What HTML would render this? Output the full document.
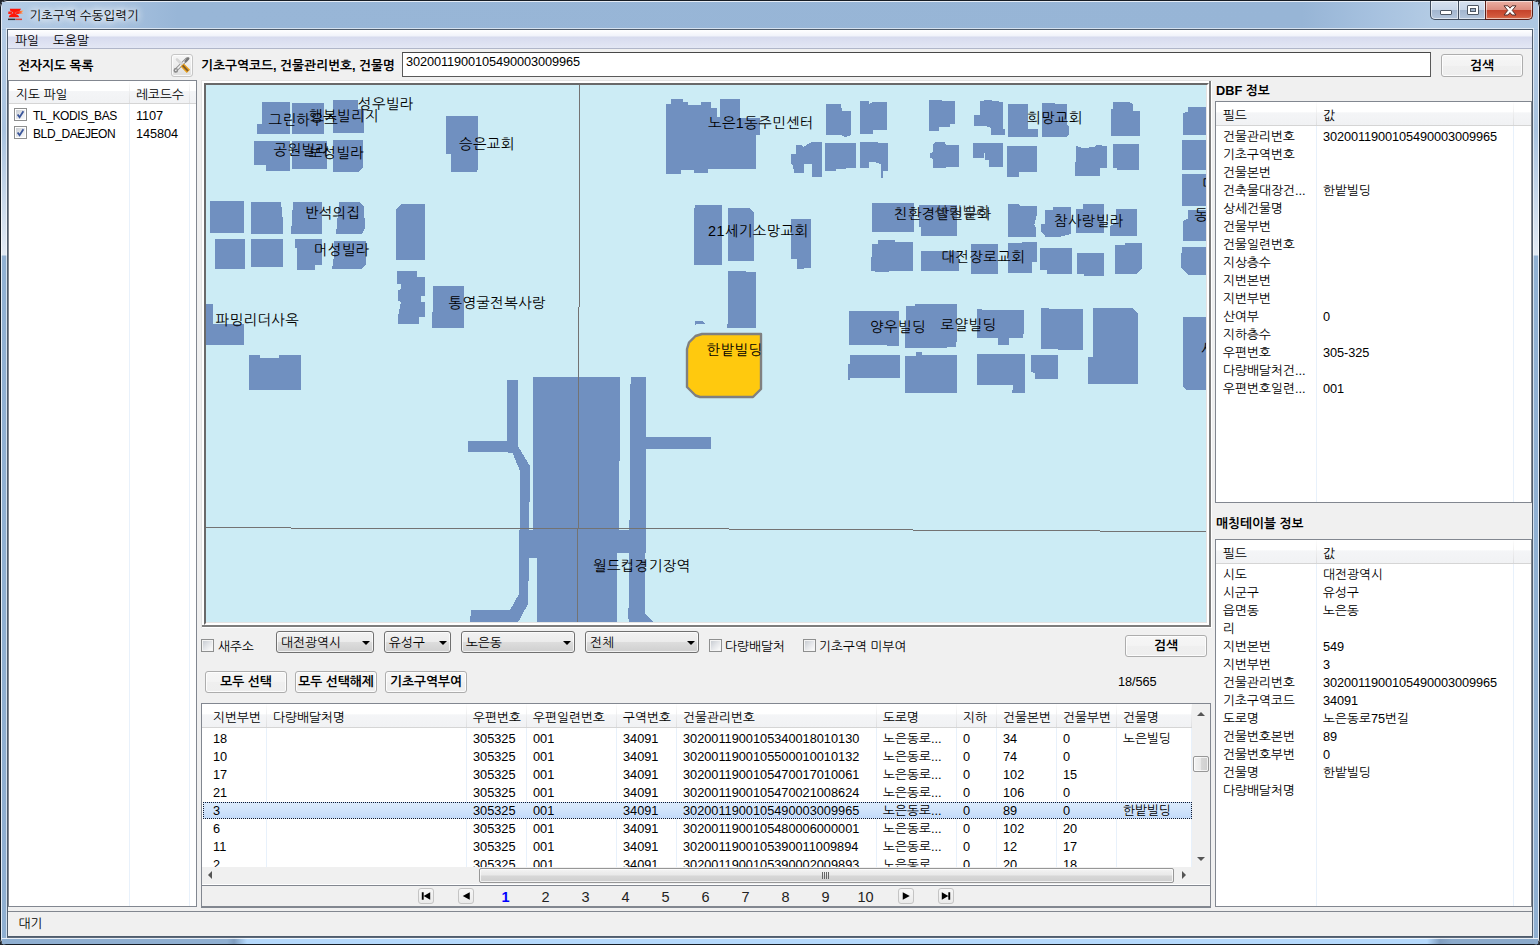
<!DOCTYPE html>
<html lang="ko"><head><meta charset="utf-8"><title>기초구역 수동입력기</title>
<style>
*{box-sizing:border-box;margin:0;padding:0}
html,body{width:1540px;height:945px;overflow:hidden;background:#20242b}
body{font-family:"Liberation Sans","NanumGothic",sans-serif;font-size:12.75px;color:#000;position:relative;line-height:14px}
.a{position:absolute}
.t{position:absolute;white-space:nowrap;line-height:14px;height:14px}
.b{font-weight:bold}
#frame{left:0;top:0;width:1540px;height:945px;border-radius:7px 7px 6px 6px;overflow:hidden;
 background:linear-gradient(180deg,#97b5d6 0px,#97b5d6 29px,#b4cbe4 30px,#a8c2df 130px,#e1e9f3 255px,#91b1d3 256px,#8fafd1 945px);
 box-shadow:inset 0 0 0 1px #161c24, inset 0 0 0 2px rgba(255,255,255,.75)}
#tbar{left:2px;top:2px;width:1536px;height:27px;background:linear-gradient(90deg,#b4cce6 0,#a9c3e0 100px,#98b6d7 175px,#97b5d6 1300px,#a6c1df 1370px,#b3cbe4 1430px,#aec7e2 1536px)}
#bbar{left:2px;top:938px;width:1536px;height:5px;background:linear-gradient(90deg,#8fafd1 0,#8fafd1 225px,#7f9dbf 232px,#b5d9fc 245px,#b5d9fc 1425px,#7f9dbf 1438px,#8baacb 1450px,#8baacb 1536px);border-top:1px solid rgba(255,255,255,.8);box-sizing:content-box}
.cap{position:absolute;top:1px;height:19px;border:1px solid #3f4b5c;border-top:none;box-shadow:inset 0 0 0 1px rgba(255,255,255,.55)}
#client{left:8px;top:30px;width:1524px;height:906px;background:#f0f0f0;box-shadow:0 0 0 1px #4f5c6c,0 0 0 2px rgba(255,255,255,.6)}
#menubar{left:8px;top:30px;width:1524px;height:19px;background:linear-gradient(180deg,#fff 0,#f1f3fa 6px,#d7dbee 7px,#e2e6f4 17px,#e4e8f5 18px);border-bottom:1px solid #b0b6c9}
.lv{position:absolute;background:#fff;border:1px solid #828790;overflow:hidden}
.hd{position:absolute;left:0;top:0;right:0;background:linear-gradient(180deg,#fff 0,#fff 45%,#f4f5f7 46%,#f1f2f4 100%);border-bottom:1px solid #d5d5d5}
.hs{position:absolute;top:0;width:1px;background:linear-gradient(180deg,#fdfdfd,#dedfe1)}
.cs{position:absolute;width:1px;background:#e8f1fb}
.btn{position:absolute;border:1px solid #adadad;border-radius:3px;background:linear-gradient(180deg,#f6f6f6 0,#f3f3f3 50%,#efefef 51%,#eeeeee 100%);box-shadow:inset 0 0 0 1px rgba(255,255,255,.8);text-align:center;font-weight:bold;white-space:nowrap}
.cb{position:absolute;width:13px;height:13px;border:1px solid #8e8f8f;background:#f4f4f4}
.cb i{position:absolute;left:1px;top:1px;width:9px;height:9px;background:linear-gradient(135deg,#c9cdd3 0,#e4e6e9 50%,#fbfbfb 100%)}
.combo{position:absolute;height:22px;border:1px solid #707070;border-radius:3px;background:linear-gradient(180deg,#f2f2f2 0,#ebebeb 50%,#dddddd 51%,#cfcfcf 100%);box-shadow:inset 0 0 0 1px rgba(255,255,255,.7)}
.combo span{position:absolute;left:4px;top:3.5px;white-space:nowrap}
.combo b{position:absolute;right:3px;top:9px;width:0;height:0;border-left:4px solid transparent;border-right:4px solid transparent;border-top:4px solid #000}
</style></head>
<body>
<div id="frame" class="a"><div id="tbar" class="a"></div><div id="bbar" class="a"></div></div>
<svg class="a" style="left:7px;top:7px" width="18" height="15" viewBox="7 7 18 15"><defs><linearGradient id="fl" x1="0" x2="1"><stop offset="0" stop-color="#ff2a10"/><stop offset="1" stop-color="#ffd070"/></linearGradient></defs><path d="M9.8 8.8H21L19.6 11L16 12L12.6 12L10.4 11Z" fill="#ff1505"/><path d="M8.8 17.2H19.4L18 15L15 13.8L12 13.8L9.6 15Z" fill="#ff1505"/><path d="M8.4 11.6H12.2L11.8 14H8.2ZM12.8 11.4H16L15.4 14.2H12.4ZM16.4 11.2H19.6L18.8 14H15.8Z" fill="#ff2010"/><path d="M19 11L24 10.6L21.5 12.4L23.6 13.6L18.6 13.8Z" fill="url(#fl)"/><rect x="8" y="18.6" width="7.4" height="1.5" fill="#333"/><rect x="15.6" y="18.6" width="6.4" height="1.5" fill="#e0453a"/></svg>
<div class="t " style="left:29.5px;top:8.5px;font-size:12.5px;text-shadow:0 0 6px #fff,0 0 8px #fff,0 0 10px rgba(255,255,255,.9)">기초구역 수동입력기</div>
<div class="cap" style="left:1430px;width:29px;border-radius:0 0 0 5px;background:linear-gradient(180deg,#d6e1ef 0,#c8d6e8 48%,#a3b6cf 52%,#b4c6dc 100%)"><div class="a" style="left:9px;top:9px;width:12px;height:5px;background:#fff;border:1px solid #4d5764;border-radius:1px"></div></div>
<div class="cap" style="left:1458px;width:28px;background:linear-gradient(180deg,#d6e1ef 0,#c8d6e8 48%,#a3b6cf 52%,#b4c6dc 100%)"><div class="a" style="left:8px;top:4px;width:12px;height:10px;background:#fff;border:1px solid #4d5764;border-radius:1px"><div class="a" style="left:2px;top:2px;width:6px;height:4px;border:1px solid #4d5764;background:#9fb1c8"></div></div></div>
<div class="cap" style="left:1485px;width:48px;border-radius:0 0 5px 0;border-color:#5a1f18;background:linear-gradient(180deg,#eab0a4 0,#dc8c7e 48%,#c5432b 52%,#d2583c 85%,#d97858 100%)"><svg class="a" style="left:16px;top:3px" width="16" height="13" viewBox="0 0 16 13"><path d="M2 1.8L6 1.8L8 4.2L10 1.8L14 1.8L10.2 6.4L14 11L10 11L8 8.6L6 11L2 11L5.8 6.4Z" fill="#fff" stroke="#54302c" stroke-width="1"/></svg></div>
<div id="client" class="a"></div>
<div id="menubar" class="a"></div>
<div class="t " style="left:15px;top:33.5px;">파일</div>
<div class="t " style="left:53px;top:33.5px;">도움말</div>
<div class="t b" style="left:18px;top:59px;">전자지도 목록</div>
<div class="btn" style="left:171px;top:54px;width:22px;height:23px;border-color:#c6c6c6;background:linear-gradient(180deg,#f6f6f6 0,#ededed 50%,#dedede 100%)" id="toolbtn"><svg class="a" style="left:0;top:0" width="20" height="21" viewBox="172 55 20 21"><path d="M175.5 70.5L187 59" stroke="#8d8d8d" stroke-width="3.2" stroke-linecap="round"/><path d="M175.8 70.2L186.5 59.5" stroke="#f4f4f4" stroke-width="1.6" stroke-linecap="round"/><path d="M185.6 61.4L188.3 58.4" stroke="#777" stroke-width="2.4" stroke-linecap="round"/><circle cx="175.8" cy="70.4" r="1.7" fill="none" stroke="#8a8a8a" stroke-width="1.2"/><path d="M177 59.5L181.6 64" stroke="#d6d6d6" stroke-width="2.6" stroke-linecap="round"/><path d="M182.2 65L188.4 71.4" stroke="#e9a01c" stroke-width="4.6"/><path d="M182.6 65.4L188 71" stroke="#7b5a2e" stroke-width="1.8"/></svg></div>
<div class="t b" style="left:201px;top:59px;">기초구역코드, 건물관리번호, 건물명</div>
<div class="a" style="left:402px;top:52px;width:1029px;height:25px;background:#fff;border:1px solid #5a5a5a;border-top-color:#484848"></div>
<div class="t " style="left:406px;top:55px;letter-spacing:-0.09px;">3020011900105490003009965</div>
<div class="btn" style="left:1441px;top:54px;width:82px;height:23px;line-height:22px">검색</div>
<div class="lv" style="left:8px;top:80px;width:189px;height:827px">
<div class="hd" style="height:23px"></div>
<div class="hs" style="left:120px;height:22px"></div><div class="hs" style="left:180px;height:22px"></div>
<div class="cs" style="left:120px;top:23px;height:810px"></div><div class="cs" style="left:180px;top:23px;height:810px"></div>
</div>
<div class="t " style="left:16px;top:87.5px;">지도 파일</div>
<div class="t " style="left:136px;top:87.5px;">레코드수</div>
<div class="cb" style="left:14px;top:108.0px;background:#fff" ><i></i><svg width="11" height="11" viewBox="0 0 11 11" style="position:absolute;left:0;top:0"><path d="M2.6 5.4 L4.6 8.2 L8.4 2.2" stroke="#3a559a" stroke-width="1.8" fill="none"/></svg></div>
<div class="t " style="left:33px;top:108.5px;font-size:12px;letter-spacing:-0.4px">TL_KODIS_BAS</div>
<div class="t " style="left:136px;top:108.5px;letter-spacing:-0.09px;">1107</div>
<div class="cb" style="left:14px;top:126.0px;background:#fff" ><i></i><svg width="11" height="11" viewBox="0 0 11 11" style="position:absolute;left:0;top:0"><path d="M2.6 5.4 L4.6 8.2 L8.4 2.2" stroke="#3a559a" stroke-width="1.8" fill="none"/></svg></div>
<div class="t " style="left:33px;top:126.5px;font-size:12px;letter-spacing:-0.4px">BLD_DAEJEON</div>
<div class="t " style="left:136px;top:126.5px;letter-spacing:-0.09px;">145804</div>
<div id="mapwrap" class="a" style="left:201px;top:80px;width:1011px;height:548px;background:#fff;border-top:1px solid #e3e3e3;border-left:1px solid #e3e3e3"></div>
<div class="a" style="left:202px;top:81px;width:1009px;height:546px;background:#fff;border-right:2px solid #7d7d7d;border-bottom:2px solid #7d7d7d"></div>
<div class="a" style="left:204px;top:83px;width:1005px;height:542px;background:#e3e3e3;border-top:2px solid #696969;border-left:2px solid #696969;border-right:2px solid #fff;border-bottom:2px solid #fff"></div>
<div id="map" class="a" style="left:206px;top:85px;width:1000px;height:537px;overflow:hidden;background:#ccecf5"><svg width="1000" height="538" viewBox="206 85 1000 538" style="position:absolute;left:0;top:0;display:block" shape-rendering="crispEdges">
<rect x="206" y="85" width="1000" height="538" fill="#ccecf5"/>
<g fill="#7090c0">
<polygon points="262,102 290,102 290,134 257,134 257,124 262,124"/>
<polygon points="292,103 323.5,103 323.5,133.5 292,133.5"/>
<polygon points="333,100 358,100 358,109 364,109 364,133 333,133"/>
<polygon points="254,141 290,141 290,171 266,171 266,165 254,165"/>
<polygon points="292,141 327,141 327,169 292,169"/>
<polygon points="333,140 363,140 363,167 358,172 333,172"/>
<polygon points="210,201 244,201 244,233 210,233"/>
<polygon points="251.5,202 281,202 283,222 283,234 251,234"/>
<polygon points="293,202 322,202 322,234 291,234"/>
<polygon points="339,202 359,202 364,207 365,228 362,234 336,234"/>
<polygon points="401,204 425,204 425,259.5 396,259.5 396,210"/>
<polygon points="215,239 245,239 245,269 215,269"/>
<polygon points="251,239 283,239 283,267 251,267"/>
<polygon points="295,239 322,239 322,265 315,265 315,270 297,270 297,248 295,248"/>
<polygon points="334,241 366,241 366,264 361,269 332,269 334,256"/>
<polygon points="397,271 417,271 417,277 425,277 425,296 421,296 421,302 425,302 425,317 419,317 419,324 398,324 398,316 401,302 398,301 398,290 401,289 401,284 397,284"/>
<polygon points="433,286 464,286 464,328 432,328 432,312 433,312"/>
<polygon points="206,304 213,304 213,324 244,324 244,345 206,345"/>
<polygon points="249,355 260,355 260,357.5 279,357.5 279,355 301,355 301,390 249,390"/>
<polygon points="446,116 478,116 478,168 477,172 451,172 451,154 446,154"/>
<polygon points="666,104 671,104 671,99 683,99 683,102 688,102 688,105 701,105 701,102 711,102 711,108 717,108 717,117 720,117 720,99 740,99 740,118 760,118 760,135 756,135 756,169 708,169 708,173 694,173 694,170 681,170 681,174 666,174"/>
<polygon points="826,104 841,104 842,111 851,111 851,135 845,137 841,135 826,135"/>
<polygon points="860,101 869,101 869,104 873,102 887,102 887,130 873,130 873,134 860,134"/>
<polygon points="796,145 802,145 803,147 812,142 822,142 822,177 812,177 812,164 804,164 804,173 794,173 793,165 791,164 791,154 796,154"/>
<polygon points="825,143 856,143 856,168 836,169 836,171 825,171"/>
<polygon points="860,142 878,142 878,143 888,143 888,171 883,171 883,178 881,178 881,164 874,162 869,162 869,168 860,168"/>
<polygon points="695,205 722,205 722,265 694,265 694,211"/>
<polygon points="728,208 750,208 754,212.6 754,261 728,261"/>
<polygon points="791,219 811,219 811,268 797,269 797,259.5 791,258.7"/>
<polygon points="728,271 746,271 746,272 756,272 756,328 727,328 727,324 728,324"/>
<polygon points="695,321 703,321 705,324 696,324.5 695,325.5"/>
<polygon points="929,100 955,101 955,124 950,124 950,127 939,127 939,131 929,131"/>
<polygon points="980,101 988,100 1003,102 1003,129 1005,129 1005,135 991,135 991,128 986,126 974,125.5 974,115 980,115"/>
<polygon points="1008,104 1028,104 1028,129 1038,129 1038,137 1008,137"/>
<polygon points="1042,103 1067,104 1067,125 1069,126 1069,134 1066,137 1042,137"/>
<polygon points="1113,102 1129,102 1133,104 1133,111 1140,111 1140,136 1111,136 1111,108.5 1113,108.5"/>
<polygon points="935,142 945,142 946,145 959,145 959,167 933,168 933,159 930,158 930,153 933,152 933,145"/>
<polygon points="973,143 1003,143 1003,167 989,167 989,160 985,160 985,153 984,153 984,158 973,158"/>
<polygon points="1007,146 1037,146 1037,172 1019,172 1019,177 1007,177"/>
<polygon points="1076,146 1083,148 1095,147 1096,145 1107,146 1107,168 1100,168 1100,176 1075,176 1075,162 1076,162"/>
<polygon points="1113,144 1139,144 1139,170 1117,170 1117,168 1113,168"/>
<polygon points="872,203 914,203 914,231.5 872,231.5"/>
<polygon points="919,205 957,205 957,236 921,236 921,227 919,227"/>
<polygon points="1008,204 1019,204 1020,206 1037,206 1037,214 1034.5,224.5 1036,228 1036,236.5 1008,236.5"/>
<polygon points="1053,207 1071,207 1071,234 1061,236.5 1045.5,236.5 1041,231 1041,224.5 1044.6,223.6 1044.6,210 1053,210"/>
<polygon points="1083,204 1104,204 1104,233 1076,233 1076,209 1083,209"/>
<polygon points="1116,209 1137,209 1137,236 1110,236 1110,226 1116,223"/>
<polygon points="1187.5,107 1207,107 1207,135 1183,135 1183,113 1187.5,112"/>
<polygon points="1182,140 1207,140 1207,170 1182,170"/>
<polygon points="1182,174 1207,174 1207,206 1182,206"/>
<polygon points="1187.5,210 1207,210 1207,241 1183,241 1183,221 1187.5,218.6"/>
<polygon points="1182,246.5 1207,246.5 1207,274.5 1187.6,274.5 1181,268 1181,254.5 1182,252"/>
<polygon points="1183,317 1207,317 1207,390 1186,390 1183,387"/>
<polygon points="872,243.5 878,243.5 878,240 895,240 895,242 913,242 913,270.5 877,272 871,270.5"/>
<polygon points="921,251 959,251 959,270.5 921,270.5"/>
<polygon points="971,244 998,244 998,273.6 971,273.6"/>
<polygon points="1008,243 1037,242 1037,261.6 1032,262 1032,272.7 1008,272.7"/>
<polygon points="1040,248 1072,248 1072,274 1047,274 1047,270.5 1040,270"/>
<polygon points="1077,253 1104,253 1104,275.5 1084,275.5 1084,274.4 1077,274.4"/>
<polygon points="1115,245 1125,245 1125,243 1142,243 1142,268 1136,274.4 1115,274"/>
<polygon points="849,311 899,311 899,345.5 887,345.5 887,345 849,345"/>
<polygon points="906,306.4 915,306.4 915,304 957,304 957,336.6 956,346.7 946,347.6 905,347.6"/>
<polygon points="977,309 982,309 982,310 1024,310 1024,330.6 1023,337.7 1009,337.7 1009,344.7 998,344.7 998,337.7 977,337.7"/>
<polygon points="1041,308 1049,308 1049,309 1083,309 1083,350 1057.5,350 1057.5,348.7 1041,348.7"/>
<polygon points="1093,308 1132,308 1138,313.7 1138,384 1088,384 1088,357 1093,357"/>
<polygon points="850,355 900,355 900,378.4 850,378.4 850,380 848,380 848,364.5 850,364"/>
<polygon points="905,355.5 916,355.5 916,352 922,352 922,355 957,355 957,393 905,393"/>
<polygon points="977,354 1025,354 1025,393 1012,393 1012,390 1013,390 1013,385 977,385"/>
<polygon points="1031,355 1058,355 1058,379 1035,379 1035,373 1031,372"/>
<polygon points="533,377 620,377 620,461 619,461 619,531 533,531"/>
<polygon points="537,531 617,531 617,623 537,623"/>
<polygon points="519,530 646,530 646,553 519,553"/>
<polygon points="519,553 537,553 537,558 519,558"/>
<polygon points="507,380 518,380 518,446 530,466 530,502 529,502 529,531 520,531 520,471 512.5,453 503,452 468,452 468,441 507,441"/>
<polygon points="519,531 529,531 529,558 528,604 517.6,623 470,623 471,610 510,610 519.3,593.5"/>
<polygon points="631,377 646,377 646,531 629,531 630,509 630,384 631,384"/>
<polygon points="646,437 711,437 711,449 646,449"/>
<polygon points="629,553 644.6,553 644.6,613 654,623 629.3,623 628,616 628,608 629,608"/>
</g>
<polygon points="687,349 689,342.5 695.5,336 702,334 761,334 761,389 753,397 700,397 695.5,395.5 687,387" fill="#ffc90e" stroke="#808080" stroke-width="2.4" stroke-linejoin="round" shape-rendering="auto"/>
<g stroke="#737373" stroke-width="1" fill="none">
<path d="M579.5 85V307M578.5 307V528M577.5 528V623"/>
<path d="M206 527.5H291M291 528.5H729M729 529.5H913M913 530.5H1100M1100 531.5H1206"/>
</g>
<g font-size="14.4" letter-spacing="0.4" fill="#000" shape-rendering="auto" style="font-family:&quot;Liberation Sans&quot;,&quot;NanumGothic&quot;,sans-serif">
<text x="358" y="108.5">성우빌라</text>
<text x="309" y="120.5">행복빌리지</text>
<text x="268.5" y="124.5">그린하우스</text>
<text x="273.5" y="155">공원빌라</text>
<text x="308.5" y="157.5">보성빌라</text>
<text x="305" y="217.5">반석의집</text>
<text x="314" y="254.5">머성빌라</text>
<text x="215.5" y="324.5">파밍리더사옥</text>
<text x="448.5" y="307.5">통영굴전복사랑</text>
<text x="459" y="148.5">승은교회</text>
<text x="708" y="127.5">노은1동주민센터</text>
<text x="708" y="235.5">21세기소망교회</text>
<text x="1027" y="122.5">희망교회</text>
<text x="894" y="218.5">친환경발전문화</text>
<text x="934.5" y="216.5" fill="#2a2f36">성림빌라</text>
<text x="1054" y="225.5">참사랑빌라</text>
<text x="941.5" y="261.5">대전장로교회</text>
<text x="940.5" y="330">로얄빌딩</text>
<text x="870" y="332">양우빌딩</text>
<text x="706.5" y="355">한밭빌딩</text>
<text x="593" y="570.5">월드컵경기장역</text>
<text x="1194.5" y="219.5">동부</text>
<text x="1202.5" y="188.5">대</text>
<text x="1201" y="353.5">사</text>
</g></svg></div>
<div class="cb" style="left:201px;top:639px"><i></i></div>
<div class="t " style="left:218px;top:639.5px;">새주소</div>
<div class="combo" style="left:276px;top:631px;width:98px"><span>대전광역시</span><b></b></div>
<div class="combo" style="left:384px;top:631px;width:67px"><span>유성구</span><b></b></div>
<div class="combo" style="left:461px;top:631px;width:114px"><span>노은동</span><b></b></div>
<div class="combo" style="left:585px;top:631px;width:114px"><span>전체</span><b></b></div>
<div class="cb" style="left:709px;top:639px"><i></i></div>
<div class="t " style="left:725px;top:639.5px;">다량배달처</div>
<div class="cb" style="left:803px;top:639px"><i></i></div>
<div class="t " style="left:819px;top:639.5px;">기초구역 미부여</div>
<div class="btn" style="left:1125px;top:635px;width:82px;height:22px;line-height:20px">검색</div>
<div class="btn" style="left:205px;top:671px;width:82px;height:22px;line-height:20px">모두 선택</div>
<div class="btn" style="left:295px;top:671px;width:82px;height:22px;line-height:20px">모두 선택해제</div>
<div class="btn" style="left:385px;top:671px;width:82px;height:22px;line-height:20px">기초구역부여</div>
<div class="t " style="left:1118px;top:675px;letter-spacing:-0.09px;">18/565</div>
<div class="lv" style="left:201px;top:703px;width:1010px;height:205px" id="tbl">
<div class="hd" style="height:24px;right:18px"></div>
<div class="hs" style="left:64px;height:23px"></div>
<div class="cs" style="left:64px;top:24px;height:141px"></div>
<div class="hs" style="left:264px;height:23px"></div>
<div class="cs" style="left:264px;top:24px;height:141px"></div>
<div class="hs" style="left:324px;height:23px"></div>
<div class="cs" style="left:324px;top:24px;height:141px"></div>
<div class="hs" style="left:414px;height:23px"></div>
<div class="cs" style="left:414px;top:24px;height:141px"></div>
<div class="hs" style="left:474px;height:23px"></div>
<div class="cs" style="left:474px;top:24px;height:141px"></div>
<div class="hs" style="left:674px;height:23px"></div>
<div class="cs" style="left:674px;top:24px;height:141px"></div>
<div class="hs" style="left:754px;height:23px"></div>
<div class="cs" style="left:754px;top:24px;height:141px"></div>
<div class="hs" style="left:794px;height:23px"></div>
<div class="cs" style="left:794px;top:24px;height:141px"></div>
<div class="hs" style="left:854px;height:23px"></div>
<div class="cs" style="left:854px;top:24px;height:141px"></div>
<div class="hs" style="left:914px;height:23px"></div>
<div class="cs" style="left:914px;top:24px;height:141px"></div>
<div class="hs" style="left:989px;height:23px"></div>
<div class="cs" style="left:989px;top:24px;height:141px"></div>
</div>
<div class="t " style="left:213px;top:711px;">지번부번</div>
<div class="t " style="left:273px;top:711px;">다량배달처명</div>
<div class="t " style="left:473px;top:711px;">우편번호</div>
<div class="t " style="left:533px;top:711px;">우편일련번호</div>
<div class="t " style="left:623px;top:711px;">구역번호</div>
<div class="t " style="left:683px;top:711px;">건물관리번호</div>
<div class="t " style="left:883px;top:711px;">도로명</div>
<div class="t " style="left:963px;top:711px;">지하</div>
<div class="t " style="left:1003px;top:711px;">건물본번</div>
<div class="t " style="left:1063px;top:711px;">건물부번</div>
<div class="t " style="left:1123px;top:711px;">건물명</div>
<div class="a" style="left:202px;top:727px;width:990px;height:140px;overflow:hidden">
<div class="a" style="left:1px;top:75px;width:989px;height:17px;background:linear-gradient(180deg,#dcebfc,#c4dbfa);border:1px dotted #101a30;"></div>
<div class="t" style="left:11px;top:5px">18</div>
<div class="t" style="left:271px;top:5px">305325</div>
<div class="t" style="left:331px;top:5px">001</div>
<div class="t" style="left:421px;top:5px">34091</div>
<div class="t" style="left:481px;top:5px">3020011900105340018010130</div>
<div class="t" style="left:681px;top:5px">노은동로...</div>
<div class="t" style="left:761px;top:5px">0</div>
<div class="t" style="left:801px;top:5px">34</div>
<div class="t" style="left:861px;top:5px">0</div>
<div class="t" style="left:921px;top:5px">노은빌딩</div>
<div class="t" style="left:11px;top:23px">10</div>
<div class="t" style="left:271px;top:23px">305325</div>
<div class="t" style="left:331px;top:23px">001</div>
<div class="t" style="left:421px;top:23px">34091</div>
<div class="t" style="left:481px;top:23px">3020011900105500010010132</div>
<div class="t" style="left:681px;top:23px">노은동로...</div>
<div class="t" style="left:761px;top:23px">0</div>
<div class="t" style="left:801px;top:23px">74</div>
<div class="t" style="left:861px;top:23px">0</div>
<div class="t" style="left:11px;top:41px">17</div>
<div class="t" style="left:271px;top:41px">305325</div>
<div class="t" style="left:331px;top:41px">001</div>
<div class="t" style="left:421px;top:41px">34091</div>
<div class="t" style="left:481px;top:41px">3020011900105470017010061</div>
<div class="t" style="left:681px;top:41px">노은동로...</div>
<div class="t" style="left:761px;top:41px">0</div>
<div class="t" style="left:801px;top:41px">102</div>
<div class="t" style="left:861px;top:41px">15</div>
<div class="t" style="left:11px;top:59px">21</div>
<div class="t" style="left:271px;top:59px">305325</div>
<div class="t" style="left:331px;top:59px">001</div>
<div class="t" style="left:421px;top:59px">34091</div>
<div class="t" style="left:481px;top:59px">3020011900105470021008624</div>
<div class="t" style="left:681px;top:59px">노은동로...</div>
<div class="t" style="left:761px;top:59px">0</div>
<div class="t" style="left:801px;top:59px">106</div>
<div class="t" style="left:861px;top:59px">0</div>
<div class="t" style="left:11px;top:77px">3</div>
<div class="t" style="left:271px;top:77px">305325</div>
<div class="t" style="left:331px;top:77px">001</div>
<div class="t" style="left:421px;top:77px">34091</div>
<div class="t" style="left:481px;top:77px">3020011900105490003009965</div>
<div class="t" style="left:681px;top:77px">노은동로...</div>
<div class="t" style="left:761px;top:77px">0</div>
<div class="t" style="left:801px;top:77px">89</div>
<div class="t" style="left:861px;top:77px">0</div>
<div class="t" style="left:921px;top:77px">한밭빌딩</div>
<div class="t" style="left:11px;top:95px">6</div>
<div class="t" style="left:271px;top:95px">305325</div>
<div class="t" style="left:331px;top:95px">001</div>
<div class="t" style="left:421px;top:95px">34091</div>
<div class="t" style="left:481px;top:95px">3020011900105480006000001</div>
<div class="t" style="left:681px;top:95px">노은동로...</div>
<div class="t" style="left:761px;top:95px">0</div>
<div class="t" style="left:801px;top:95px">102</div>
<div class="t" style="left:861px;top:95px">20</div>
<div class="t" style="left:11px;top:113px">11</div>
<div class="t" style="left:271px;top:113px">305325</div>
<div class="t" style="left:331px;top:113px">001</div>
<div class="t" style="left:421px;top:113px">34091</div>
<div class="t" style="left:481px;top:113px">3020011900105390011009894</div>
<div class="t" style="left:681px;top:113px">노은동로...</div>
<div class="t" style="left:761px;top:113px">0</div>
<div class="t" style="left:801px;top:113px">12</div>
<div class="t" style="left:861px;top:113px">17</div>
<div class="t" style="left:11px;top:131px">2</div>
<div class="t" style="left:271px;top:131px">305325</div>
<div class="t" style="left:331px;top:131px">001</div>
<div class="t" style="left:421px;top:131px">34091</div>
<div class="t" style="left:481px;top:131px">3020011900105390002009893</div>
<div class="t" style="left:681px;top:131px">노은동로...</div>
<div class="t" style="left:761px;top:131px">0</div>
<div class="t" style="left:801px;top:131px">20</div>
<div class="t" style="left:861px;top:131px">18</div>
</div>
<div class="a" id="vsb" style="left:1192px;top:704px;width:18px;height:163px;background:#f0f0f0"></div>
<div class="a" style="left:1197px;top:712px;width:0;height:0;border-left:4px solid transparent;border-right:4px solid transparent;border-bottom:4px solid #555"></div>
<div class="a" style="left:1197px;top:857px;width:0;height:0;border-left:4px solid transparent;border-right:4px solid transparent;border-top:4px solid #555"></div>
<div class="a" style="left:1193px;top:756px;width:16px;height:16px;border:1px solid #979797;border-radius:2px;background:linear-gradient(90deg,#f3f3f3 0,#e8e8e8 48%,#d7d7d7 52%,#cfcfcf 100%);box-shadow:inset 0 0 0 1px rgba(255,255,255,.7)"></div>
<div class="a" id="hsb" style="left:202px;top:867px;width:990px;height:17px;background:#f0f0f0"></div>
<div class="a" style="left:1192px;top:867px;width:18px;height:17px;background:#f0f0f0"></div>
<div class="a" style="left:208px;top:871px;width:0;height:0;border-top:4px solid transparent;border-bottom:4px solid transparent;border-right:4px solid #555"></div>
<div class="a" style="left:1182px;top:871px;width:0;height:0;border-top:4px solid transparent;border-bottom:4px solid transparent;border-left:4px solid #555"></div>
<div class="a" style="left:479px;top:868px;width:695px;height:15px;border:1px solid #979797;border-radius:2px;background:linear-gradient(180deg,#f3f3f3 0,#e8e8e8 48%,#d7d7d7 52%,#cfcfcf 100%);box-shadow:inset 0 0 0 1px rgba(255,255,255,.7)"><div class="a" style="left:342px;top:3px;width:7px;height:7px;background:repeating-linear-gradient(90deg,#666 0,#666 1px,transparent 1px,transparent 2px)"></div></div>
<div class="a" style="left:201px;top:885px;width:1010px;height:22px;background:#f0f0f0;border:1px solid #828790"></div>
<div class="a" style="left:418px;top:888px;width:16px;height:16px;border:1px solid #c4c4c4;border-radius:3px;background:linear-gradient(180deg,#f7f7f7,#eaeaea)"><svg class="a" style="left:0;top:0" width="14" height="14" viewBox="0 0 15 14"><path d="M3 3H5V11H3ZM12 3V11L5 7Z" fill="#000"/></svg></div>
<div class="a" style="left:458px;top:888px;width:16px;height:16px;border:1px solid #c4c4c4;border-radius:3px;background:linear-gradient(180deg,#f7f7f7,#eaeaea)"><svg class="a" style="left:0;top:0" width="14" height="14" viewBox="0 0 15 14"><path d="M11.5 3V11L4 7Z" fill="#000"/></svg></div>
<div class="a" style="left:898px;top:888px;width:16px;height:16px;border:1px solid #c4c4c4;border-radius:3px;background:linear-gradient(180deg,#f7f7f7,#eaeaea)"><svg class="a" style="left:0;top:0" width="14" height="14" viewBox="0 0 15 14"><path d="M4 3V11L11.5 7Z" fill="#000"/></svg></div>
<div class="a" style="left:938px;top:888px;width:16px;height:16px;border:1px solid #c4c4c4;border-radius:3px;background:linear-gradient(180deg,#f7f7f7,#eaeaea)"><svg class="a" style="left:0;top:0" width="14" height="14" viewBox="0 0 15 14"><path d="M10 3H12V11H10ZM3 3V11L10 7Z" fill="#000"/></svg></div>
<div class="t" style="left:485.5px;width:40px;text-align:center;top:888.5px;font-size:14.5px;line-height:16px;height:16px;color:#0000ff;font-weight:bold;">1</div>
<div class="t" style="left:525.5px;width:40px;text-align:center;top:888.5px;font-size:14.5px;line-height:16px;height:16px;color:#222;">2</div>
<div class="t" style="left:565.5px;width:40px;text-align:center;top:888.5px;font-size:14.5px;line-height:16px;height:16px;color:#222;">3</div>
<div class="t" style="left:605.5px;width:40px;text-align:center;top:888.5px;font-size:14.5px;line-height:16px;height:16px;color:#222;">4</div>
<div class="t" style="left:645.5px;width:40px;text-align:center;top:888.5px;font-size:14.5px;line-height:16px;height:16px;color:#222;">5</div>
<div class="t" style="left:685.5px;width:40px;text-align:center;top:888.5px;font-size:14.5px;line-height:16px;height:16px;color:#222;">6</div>
<div class="t" style="left:725.5px;width:40px;text-align:center;top:888.5px;font-size:14.5px;line-height:16px;height:16px;color:#222;">7</div>
<div class="t" style="left:765.5px;width:40px;text-align:center;top:888.5px;font-size:14.5px;line-height:16px;height:16px;color:#222;">8</div>
<div class="t" style="left:805.5px;width:40px;text-align:center;top:888.5px;font-size:14.5px;line-height:16px;height:16px;color:#222;">9</div>
<div class="t" style="left:845.5px;width:40px;text-align:center;top:888.5px;font-size:14.5px;line-height:16px;height:16px;color:#222;">10</div>
<div class="t b" style="left:1216px;top:84px;">DBF 정보</div>
<div class="lv" style="left:1215px;top:101px;width:317px;height:402px">
<div class="hd" style="height:24px"></div>
<div class="hs" style="left:100px;height:23px"></div><div class="hs" style="left:297px;height:23px"></div>
<div class="cs" style="left:100px;top:24px;height:402px"></div><div class="cs" style="left:297px;top:24px;height:402px"></div>
</div>
<div class="t " style="left:1223px;top:108.5px;">필드</div>
<div class="t " style="left:1323px;top:108.5px;">값</div>
<div class="t " style="left:1223px;top:129.5px;">건물관리번호</div>
<div class="t " style="left:1323px;top:129.5px;letter-spacing:-0.09px;">3020011900105490003009965</div>
<div class="t " style="left:1223px;top:147.5px;">기초구역번호</div>
<div class="t " style="left:1223px;top:165.5px;">건물본번</div>
<div class="t " style="left:1223px;top:183.5px;">건축물대장건...</div>
<div class="t " style="left:1323px;top:183.5px;">한밭빌딩</div>
<div class="t " style="left:1223px;top:201.5px;">상세건물명</div>
<div class="t " style="left:1223px;top:219.5px;">건물부번</div>
<div class="t " style="left:1223px;top:237.5px;">건물일련번호</div>
<div class="t " style="left:1223px;top:255.5px;">지상층수</div>
<div class="t " style="left:1223px;top:273.5px;">지번본번</div>
<div class="t " style="left:1223px;top:291.5px;">지번부번</div>
<div class="t " style="left:1223px;top:309.5px;">산여부</div>
<div class="t " style="left:1323px;top:309.5px;letter-spacing:-0.09px;">0</div>
<div class="t " style="left:1223px;top:327.5px;">지하층수</div>
<div class="t " style="left:1223px;top:345.5px;">우편번호</div>
<div class="t " style="left:1323px;top:345.5px;letter-spacing:-0.09px;">305-325</div>
<div class="t " style="left:1223px;top:363.5px;">다량배달처건...</div>
<div class="t " style="left:1223px;top:381.5px;">우편번호일련...</div>
<div class="t " style="left:1323px;top:381.5px;letter-spacing:-0.09px;">001</div>
<div class="t b" style="left:1216px;top:516.5px;">매칭테이블 정보</div>
<div class="lv" style="left:1215px;top:539px;width:317px;height:368px">
<div class="hd" style="height:24px"></div>
<div class="hs" style="left:100px;height:23px"></div><div class="hs" style="left:297px;height:23px"></div>
<div class="cs" style="left:100px;top:24px;height:368px"></div><div class="cs" style="left:297px;top:24px;height:368px"></div>
</div>
<div class="t " style="left:1223px;top:546.5px;">필드</div>
<div class="t " style="left:1323px;top:546.5px;">값</div>
<div class="t " style="left:1223px;top:567.5px;">시도</div>
<div class="t " style="left:1323px;top:567.5px;">대전광역시</div>
<div class="t " style="left:1223px;top:585.5px;">시군구</div>
<div class="t " style="left:1323px;top:585.5px;">유성구</div>
<div class="t " style="left:1223px;top:603.5px;">읍면동</div>
<div class="t " style="left:1323px;top:603.5px;">노은동</div>
<div class="t " style="left:1223px;top:621.5px;">리</div>
<div class="t " style="left:1223px;top:639.5px;">지번본번</div>
<div class="t " style="left:1323px;top:639.5px;letter-spacing:-0.09px;">549</div>
<div class="t " style="left:1223px;top:657.5px;">지번부번</div>
<div class="t " style="left:1323px;top:657.5px;letter-spacing:-0.09px;">3</div>
<div class="t " style="left:1223px;top:675.5px;">건물관리번호</div>
<div class="t " style="left:1323px;top:675.5px;letter-spacing:-0.09px;">3020011900105490003009965</div>
<div class="t " style="left:1223px;top:693.5px;">기초구역코드</div>
<div class="t " style="left:1323px;top:693.5px;letter-spacing:-0.09px;">34091</div>
<div class="t " style="left:1223px;top:711.5px;">도로명</div>
<div class="t " style="left:1323px;top:711.5px;">노은동로75번길</div>
<div class="t " style="left:1223px;top:729.5px;">건물번호본번</div>
<div class="t " style="left:1323px;top:729.5px;letter-spacing:-0.09px;">89</div>
<div class="t " style="left:1223px;top:747.5px;">건물번호부번</div>
<div class="t " style="left:1323px;top:747.5px;letter-spacing:-0.09px;">0</div>
<div class="t " style="left:1223px;top:765.5px;">건물명</div>
<div class="t " style="left:1323px;top:765.5px;">한밭빌딩</div>
<div class="t " style="left:1223px;top:783.5px;">다량배달처명</div>
<div class="a" style="left:8px;top:911px;width:1524px;height:1px;background:#828790"></div>
<div class="a" style="left:7px;top:937px;width:1526px;height:1px;background:#5d6a7b"></div>
<div class="t " style="left:18.5px;top:917px;">대기</div>

</body></html>
